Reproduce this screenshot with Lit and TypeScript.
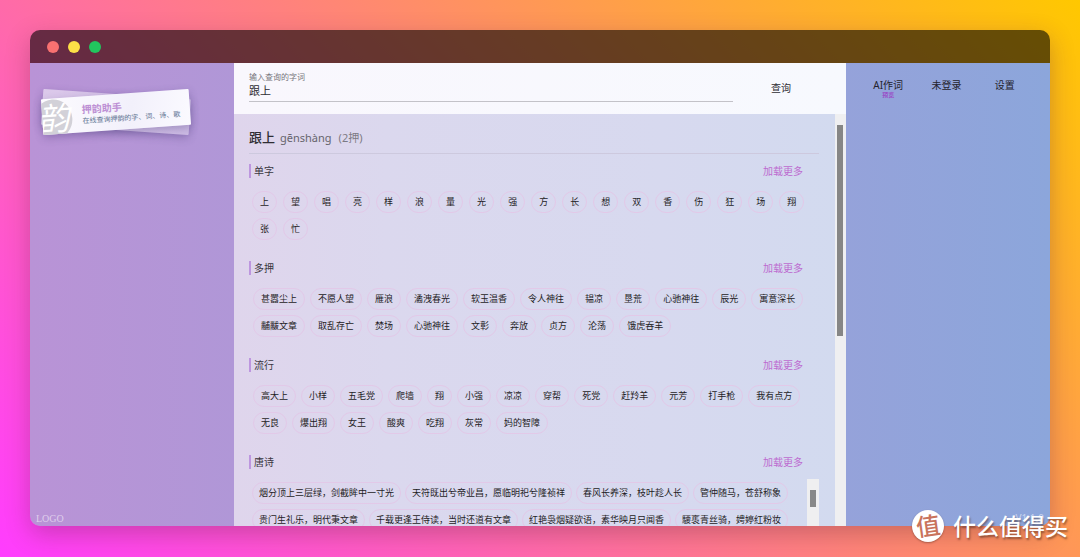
import { LitElement, html, css } from "lit";
import { customElement, property } from "lit/decorators.js";

const fonts = css`"Noto Sans", "Noto Sans CJK SC", sans-serif`;

interface Group {
  title: string;
  kind: "char" | "word" | "poem";
  words: string[];
}

const groups: Group[] = [
  { title: "单字", kind: "char", words: "上 望 唱 亮 样 浪 量 光 强 方 长 想 双 香 伤 狂 场 翔 张 忙".split(" ") },
  {
    title: "多押",
    kind: "word",
    words:
      "甚嚣尘上 不愿人望 雁浪 潏洩春光 软玉温香 令人神往 韫凉 垦荒 心驰神往 辰光 寓意深长 黼黻文章 取乱存亡 焚场 心驰神往 文彰 奔放 贞方 沦荡 饿虎吞羊".split(" "),
  },
  {
    title: "流行",
    kind: "word",
    words:
      "高大上 小样 五毛党 爬墙 翔 小强 凉凉 穿帮 死党 赶羚羊 元芳 打手枪 我有点方 无良 爆出翔 女王 酸爽 吃翔 灰常 妈的智障".split(" "),
  },
  {
    title: "唐诗",
    kind: "poem",
    words: [
      "烟分顶上三层绿，剑截眸中一寸光",
      "天符既出兮帝业昌，愿临明祀兮隆祯祥",
      "春风长养深，枝叶趁人长",
      "管仲随马，苍舒称象",
      "贵门生礼乐，明代秉文章",
      "千载更逢王侍读，当时还道有文章",
      "红艳袅烟疑欲语，素华映月只闻香",
      "騕褭青丝骑，娉婷红粉妆",
    ],
  },
];

@customElement("brand-card")
export class BrandCard extends LitElement {
  static styles = css`
    :host {
      display: block;
      position: relative;
      width: 148px;
      height: 36px;
    }
    .back,
    .front {
      height: 100%;
      border-radius: 1px;
      box-shadow: 0 3px 8px rgba(60, 50, 110, 0.3);
    }
    .back {
      position: absolute;
      inset: 0;
      background: linear-gradient(90deg, rgba(255, 255, 255, 0.5), rgba(255, 255, 255, 0.35));
      transform: rotate(4deg);
    }
    .front {
      position: relative;
      display: flex;
      align-items: center;
      gap: 10px;
      overflow: hidden;
      background: linear-gradient(100deg, #fdfcff, #f2f0fb 60%, #fbfaff);
      transform: rotate(-4deg);
    }
    .seal {
      flex: none;
      width: 38px;
      height: 40px;
      margin: 6px 0 0 -8px;
      border-radius: 50%;
      background: #d2d1d8;
      color: #fff;
      font-size: 32px;
      font-style: italic;
      line-height: 38px;
      text-align: center;
    }
    .name {
      margin: 0;
      font-size: 10px;
      line-height: 12px;
      font-weight: 700;
      color: #bd8fd4;
    }
    .note {
      margin: 0;
      font-size: 7px;
      line-height: 11px;
      color: #5d7391;
      white-space: nowrap;
    }
  `;
  render() {
    return html`
      <div class="back"></div>
      <div class="front">
        <div class="seal">韵</div>
        <div>
          <h1 class="name">押韵助手</h1>
          <p class="note">在线查询押韵的字、词、诗、歌</p>
        </div>
      </div>
    `;
  }
}

@customElement("rhyme-group")
export class RhymeGroup extends LitElement {
  @property({ attribute: false }) group!: Group;
  static styles = css`
    :host {
      display: block;
    }
    .head {
      display: flex;
      align-items: center;
      justify-content: space-between;
      padding-right: 16px;
      height: 14px;
    }
    h3 {
      margin: 0;
      padding-left: 3px;
      border-left: 2px solid #bd96df;
      font-size: 10px;
      line-height: 14px;
      font-weight: 400;
      color: #3a3740;
    }
    button {
      padding: 0;
      border: 0;
      background: none;
      font: inherit;
      color: inherit;
    }
    .more {
      font-size: 10px;
      line-height: 14px;
      color: #bd6bcf;
    }
    .body {
      display: flex;
      margin-top: 13px;
    }
    .list {
      flex: 1;
      display: flex;
      flex-wrap: wrap;
      align-content: flex-start;
      gap: 5px;
      padding-left: 4px;
      padding-right: 12px;
    }
    .char {
      column-gap: 6px;
      padding-left: 3px;
    }
    .poem {
      column-gap: 4px;
      padding-left: 3px;
      padding-right: 0;
    }
    .pill {
      box-sizing: border-box;
      height: 22px;
      padding: 0 7px;
      border: 1px solid #e2c9e8;
      border-radius: 11px;
      font-size: 9px;
      line-height: 20px;
      color: #1e1c24;
      white-space: nowrap;
    }
    .poem .pill {
      padding: 0 6px;
    }
    .track {
      flex: none;
      width: 12px;
      background: #efeff0;
    }
    .thumb {
      width: 6px;
      height: 17px;
      margin: 11px 3px;
      background: #888;
    }
    .tall {
      margin-top: 10px;
      height: 70px;
    }
    .tall .list {
      padding-top: 3px;
    }
  `;
  render() {
    const { title, kind, words } = this.group;
    const poem = kind === "poem";
    return html`
      <div class="head">
        <h3>${title}</h3>
        <button class="more">加载更多</button>
      </div>
      <div class="body ${poem ? "tall" : ""}">
        <div class="list ${kind}">${words.map((w) => html`<button class="pill">${w}</button>`)}</div>
        ${poem ? html`<div class="track"><div class="thumb"></div></div>` : ""}
      </div>
    `;
  }
}

@customElement("app-root")
export class AppRoot extends LitElement {
  static styles = css`
    :host {
      display: block;
      position: relative;
      box-sizing: border-box;
      height: 100vh;
      padding: 30px 30px 31px;
      overflow: hidden;
      background: linear-gradient(45deg, #ff3cff, #ff8080 50%, #ffc800);
      font-family: ${fonts};
    }
    .window {
      display: flex;
      flex-direction: column;
      height: 100%;
      border-radius: 10px;
      overflow: hidden;
      box-shadow: 0 8px 24px rgba(90, 30, 60, 0.3);
    }
    .bar {
      flex: none;
      display: flex;
      align-items: center;
      gap: 9px;
      height: 33px;
      padding: 1px 17px 0;
      box-sizing: border-box;
      background: rgba(0, 0, 0, 0.6);
    }
    .dot {
      width: 12px;
      height: 12px;
      border-radius: 50%;
    }
    .red {
      background: #f87171;
    }
    .yellow {
      background: #fde047;
    }
    .green {
      background: #22c55e;
    }
    .panes {
      flex: 1;
      min-height: 0;
      display: grid;
      grid-template-columns: 1fr 3fr 1fr;
      background: linear-gradient(90deg, #b993d6, #8ca6db);
    }
    .side {
      display: flex;
      flex-direction: column;
      justify-content: space-between;
    }
    brand-card {
      margin: 31px 0 0 12px;
    }
    .foot {
      padding: 0 6px;
      font-size: 10px;
      line-height: 14px;
      color: rgba(255, 255, 255, 0.55);
    }
    .logo {
      font-family: "Liberation Serif", serif;
    }
    .right {
      padding-bottom: 1px;
      text-align: right;
    }
    .main {
      display: flex;
      flex-direction: column;
      min-height: 0;
    }
    .search {
      flex: none;
      display: flex;
      align-items: center;
      height: 51px;
      padding-left: 15px;
      box-sizing: border-box;
      background: linear-gradient(90deg, #f9f7fd, #f7f9fe);
    }
    .field {
      flex: 1;
      display: flex;
      flex-direction: column;
      padding-bottom: 4px;
    }
    label {
      font-size: 8px;
      line-height: 10px;
      color: #77757c;
    }
    input {
      height: 17px;
      box-sizing: content-box;
      padding: 0 0 2px;
      border: 0;
      border-bottom: 1px solid #c3c2c8;
      outline: 0;
      background: none;
      border-radius: 0;
      font-family: inherit;
      font-size: 11px;
      color: #2e2d33;
    }
    button {
      padding: 0;
      border: 0;
      background: none;
      font: inherit;
      color: inherit;
    }
    .go {
      width: 96px;
      margin-right: 17px;
      padding-bottom: 2px;
      font-size: 10px;
      line-height: 16px;
      color: #2e2d33;
    }
    .scroll {
      flex: 1;
      min-height: 0;
      display: flex;
      background: linear-gradient(90deg, #dfd5ec, #dbd8ee 25%, #d7d9ef 70%, #d2daef);
    }
    .results {
      flex: 1;
      min-width: 0;
      padding: 14px 16px 0 15px;
      overflow: hidden;
    }
    .track {
      flex: none;
      width: 11px;
      background: #efeff1;
    }
    .thumb {
      width: 6px;
      height: 211px;
      margin: 11px auto 0 2px;
      background: #868686;
    }
    .title {
      display: flex;
      align-items: baseline;
      gap: 5px;
      height: 25px;
      margin: 0 0 10px;
      border-bottom: 1px solid #cdc9de;
      font-size: 13px;
      line-height: 18px;
      font-weight: 500;
      color: #2e2d33;
    }
    .pinyin {
      font-size: 11px;
      font-weight: 400;
      color: #66646c;
    }
    .count {
      padding-left: 2px;
      font-size: 11px;
      font-weight: 400;
      color: #7c7a84;
    }
    .groups {
      display: flex;
      flex-direction: column;
      gap: 21px;
    }
    nav {
      display: grid;
      grid-template-columns: 1fr 1fr 1fr;
      padding: 15px 16px 0 13px;
      font-size: 10px;
      line-height: 14px;
      color: #24232c;
      text-align: center;
    }
    a {
      color: inherit;
      text-decoration: none;
    }
    .ai {
      position: relative;
    }
    .preview {
      position: absolute;
      left: 0;
      right: 0;
      top: 13px;
      font-size: 6px;
      line-height: 8px;
      font-weight: 700;
      color: #9a50c8;
    }
    .watermark {
      position: absolute;
      right: 12px;
      bottom: 13px;
      display: flex;
      align-items: center;
      gap: 9px;
      color: #fff;
      font-size: 23px;
      line-height: 36px;
      font-weight: 500;
      text-shadow: 1px 2px 2px rgba(60, 30, 20, 0.5);
    }
    .coin {
      width: 32px;
      height: 32px;
      border-radius: 50%;
      background: #fff;
      color: #c9735c;
      font-size: 24px;
      line-height: 31px;
      font-weight: 500;
      text-align: center;
      text-shadow: none;
      box-shadow: 0 1px 2px rgba(60, 30, 20, 0.4);
    }
    .tilt {
      display: block;
      transform: rotate(-8deg);
    }
  `;
  render() {
    return html`
      <div class="window">
        <header class="bar">
          <span class="dot red"></span><span class="dot yellow"></span><span class="dot green"></span>
        </header>
        <div class="panes">
          <aside class="side">
            <brand-card></brand-card>
            <div class="foot logo">LOGO</div>
          </aside>
          <main class="main">
            <form class="search" @submit=${(e: Event) => e.preventDefault()}>
              <div class="field">
                <label for="word">输入查询的字词</label>
                <input id="word" type="text" .value=${"跟上"} />
              </div>
              <button class="go">查询</button>
            </form>
            <div class="scroll">
              <div class="results">
                <h2 class="title">
                  <span>跟上</span><span class="pinyin">gēnshàng</span><span class="count">(2押)</span>
                </h2>
                <div class="groups">
                  ${groups.map((g) => html`<rhyme-group .group=${g}></rhyme-group>`)}
                </div>
              </div>
              <div class="track"><div class="thumb"></div></div>
            </div>
          </main>
          <aside class="side">
            <nav>
              <a class="ai" href="#ai">AI作词<span class="preview">预览</span></a>
              <a href="#login">未登录</a>
              <a href="#settings">设置</a>
            </nav>
            <div class="foot right">V1.1.0</div>
          </aside>
        </div>
      </div>
      <div class="watermark">
        <span class="coin"><span class="tilt">值</span></span><span>什么值得买</span>
      </div>
    `;
  }
}
